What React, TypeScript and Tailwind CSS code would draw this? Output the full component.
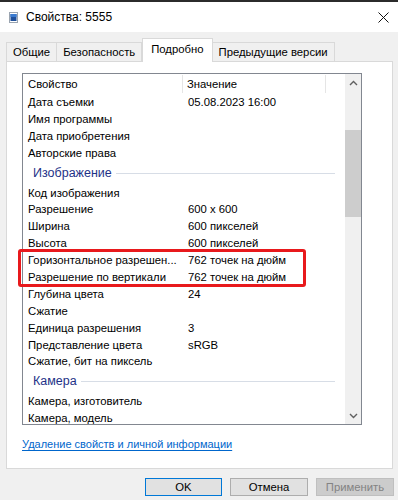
import React from 'react';

type Row =
    | { kind: 'item'; name: string; value?: string }
    | { kind: 'group'; name: string };

// Rows of the details list, top to bottom
const rows: Row[] = [
    { kind: 'item', name: 'Дата съемки', value: '05.08.2023 16:00' },
    { kind: 'item', name: 'Имя программы' },
    { kind: 'item', name: 'Дата приобретения' },
    { kind: 'item', name: 'Авторские права' },
    { kind: 'group', name: 'Изображение' },
    { kind: 'item', name: 'Код изображения' },
    { kind: 'item', name: 'Разрешение', value: '600 x 600' },
    { kind: 'item', name: 'Ширина', value: '600 пикселей' },
    { kind: 'item', name: 'Высота', value: '600 пикселей' },
    { kind: 'item', name: 'Горизонтальное разрешен...', value: '762 точек на дюйм' },
    { kind: 'item', name: 'Разрешение по вертикали', value: '762 точек на дюйм' },
    { kind: 'item', name: 'Глубина цвета', value: '24' },
    { kind: 'item', name: 'Сжатие' },
    { kind: 'item', name: 'Единица разрешения', value: '3' },
    { kind: 'item', name: 'Представление цвета', value: 'sRGB' },
    { kind: 'item', name: 'Сжатие, бит на пиксель' },
    { kind: 'group', name: 'Камера' },
    { kind: 'item', name: 'Камера, изготовитель' },
    { kind: 'item', name: 'Камера, модель' },
];

const tabs = ['Общие', 'Безопасность', 'Подробно', 'Предыдущие версии'];

const FileIcon = () => (
    <svg width="9" height="11" viewBox="0 0 9 11">
        <rect x="0.5" y="0.5" width="8" height="10" fill="#ffffff" stroke="#9aa4b0" />
        <rect x="1.5" y="2" width="6" height="7" fill="#1f4f9a" />
        <rect x="1.5" y="2" width="6" height="3" fill="#3b7bd0" />
    </svg>
);

const Chevron = ({ up }: { up: boolean }) => (
    <svg width="9" height="6" viewBox="0 0 9 6">
        <path d={up ? 'M1 5 L4.5 1.5 L8 5' : 'M1 1 L4.5 4.5 L8 1'} fill="none" stroke="#606060" strokeWidth="1.4" />
    </svg>
);

const App = () => {
    return (
        <div
            className="relative w-[398px] h-[500px] overflow-hidden bg-[#f0f0f0] text-[11.3px] text-black"
            style={{ fontFamily: '"Liberation Sans", Arial, sans-serif' }}
        >
            {/* Top edge of the window behind */}
            <div className="h-[2px] bg-[#2b2b2b]" />

            {/* Title bar */}
            <div className="h-[30px] bg-white flex items-center pl-[9px] pr-[8px]">
                <FileIcon />
                <span className="ml-[8px] text-[12px] leading-none">Свойства: 5555</span>
                <svg className="ml-auto mr-[1px]" width="11" height="11" viewBox="0 0 11 11">
                    <path d="M0.5 0.5 L10.5 10.5 M10.5 0.5 L0.5 10.5" stroke="#111" strokeWidth="1" />
                </svg>
            </div>

            {/* Tabs */}
            <div className="mt-[6px] pl-[6px] flex items-end h-[23px] relative z-10">
                {tabs.map((t) => {
                    const active = t === 'Подробно';
                    return active ? (
                        <div
                            key={t}
                            className="h-[24px] -mb-[1px] px-[8px] bg-white border border-b-0 border-[#d9d9d9] flex items-center pb-[2px]"
                        >
                            {t}
                        </div>
                    ) : (
                        <div
                            key={t}
                            className="h-[19px] px-[6px] bg-[#f0f0f0] border border-[#d9d9d9] border-b-0 -ml-[1px] first:ml-0 flex items-center"
                        >
                            {t}
                        </div>
                    );
                })}
            </div>

            {/* Tab panel */}
            <div className="ml-[6px] w-[387px] h-[408px] bg-white border border-[#d9d9d9] pt-[11px] pl-[15px]">
                {/* Details list */}
                <div className="w-[340px] h-[352px] border border-[#828790] flex overflow-hidden">
                    <div className="flex-1 overflow-hidden">
                        <div className="h-[20px] flex">
                            <div className="w-[160px] pl-[5px] flex items-center border-r border-[#e5e5e5] my-[1px]">Свойство</div>
                            <div className="w-[143px] pl-[4px] flex items-center border-r border-[#e5e5e5] my-[1px]">Значение</div>
                        </div>
                        {rows.map((r, i) =>
                            r.kind === 'group' ? (
                                <div key={i} className="h-[23px] flex items-center pl-[10px] pr-[10px] gap-[4px]">
                                    <span className="text-[12.5px] text-[#1e3287]">{r.name}</span>
                                    <div className="flex-1 h-px bg-[#d7dde6]" />
                                </div>
                            ) : (
                                <div key={i} className="h-[16.9px] flex items-center whitespace-nowrap">
                                    <div className="w-[160px] shrink-0 pl-[5px]">{r.name}</div>
                                    <div className="pl-[5px]">{r.value ?? ''}</div>
                                </div>
                            )
                        )}
                    </div>

                    {/* Vertical scrollbar */}
                    <div className="w-[16px] bg-[#f0f0f0] flex flex-col">
                        <div className="h-[17px] flex items-center justify-center">
                            <Chevron up />
                        </div>
                        <div className="h-[39px]" />
                        <div className="h-[87px] bg-[#cdcdcd]" />
                        <div className="flex-1" />
                        <div className="h-[17px] flex items-center justify-center">
                            <Chevron up={false} />
                        </div>
                    </div>
                </div>

                <div className="mt-[12px] text-[11px] text-[#0066cc] underline underline-offset-2 leading-[14px]">
                    Удаление свойств и личной информации
                </div>
            </div>

            {/* Dialog buttons */}
            <div className="mt-[9px] flex justify-end gap-[8px] pr-[4px]">
                <button className="w-[77px] h-[18px] bg-[#e1e1e1] border border-[#0078d7] flex items-center justify-center">OK</button>
                <button className="w-[78px] h-[18px] bg-[#e1e1e1] border border-[#adadad] flex items-center justify-center">Отмена</button>
                <button className="w-[78px] h-[18px] bg-[#cccccc] border border-[#bfbfbf] text-[#838383] flex items-center justify-center">Применить</button>
            </div>

            {/* Red annotation box */}
            <div className="absolute left-[18px] top-[249px] w-[288px] h-[38px] border-[3px] border-[#e8191c] rounded-[3px]" />
        </div>
    );
};

export default App;
